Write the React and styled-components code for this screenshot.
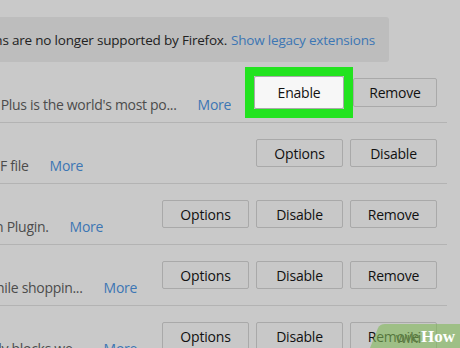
import React from "react";
import styled, { createGlobalStyle } from "styled-components";

const Global = createGlobalStyle`
  html, body { margin: 0; padding: 0; background: #c9c9c9; }
  body { font-family: "Open Sans", "Noto Sans", sans-serif; }
`;

const Page = styled.div`
  position: relative;
  width: 460px;
  height: 348px;
  overflow: hidden;
  background: #c9c9c9;
  padding-top: 17px;
  box-sizing: border-box;
`;

const Notice = styled.div`
  width: 389px;
  height: 45px;
  box-sizing: border-box;
  background: #bdbdbd;
  border-radius: 0 3px 3px 0;
  display: flex;
  align-items: center;
  justify-content: flex-end;
  padding-right: 14px;
  overflow: hidden;
  white-space: nowrap;
  font-size: 13.5px;
  color: #222;
  letter-spacing: -0.2px;
`;

const Link = styled.a`
  color: #3c76b4;
  text-decoration: none;
  margin-left: ${(p) => p.$gap || 0}px;
  flex: none;
  cursor: pointer;
`;

const List = styled.div`
  width: 447px;
`;

const Row = styled.div`
  height: 61px;
  box-sizing: border-box;
  border-bottom: 1px solid #b3b3b3;
  display: flex;
  align-items: center;
  padding-right: 10px;
`;

const Info = styled.div`
  width: ${(p) => p.$w}px;
  flex: none;
  display: flex;
  justify-content: flex-end;
  overflow: hidden;
  white-space: nowrap;
  padding-top: 24px;
  font-size: 14px;
  letter-spacing: -0.3px;
`;

const Desc = styled.span`
  color: #4c4c4c;
  flex: none;
`;

const Actions = styled.div`
  margin-left: auto;
  display: flex;
  align-items: center;
  gap: ${(p) => p.$gap ?? 7}px;
`;

const Button = styled.button`
  width: ${(p) => p.$w || 87}px;
  height: ${(p) => p.$h || 28}px;
  box-sizing: border-box;
  border: 1px solid #a9a9a9;
  border-radius: 2px;
  background: ${(p) => (p.$primary ? "#f7f7f7" : "#c8c8c8")};
  font-family: "Open Sans", "Noto Sans", sans-serif;
  font-size: 14px;
  letter-spacing: -0.2px;
  color: #111;
  padding: 0;
  cursor: pointer;
`;

const Highlight = styled.div`
  border: 9px solid #22e31f;
  display: flex;
`;

const Watermark = styled.div`
  position: absolute;
  right: 0;
  bottom: 0;
  width: 90px;
  height: 24px;
  display: flex;
  align-items: center;
  justify-content: flex-end;
  padding-right: 5px;
  box-sizing: border-box;
`;

const WmShape = styled.svg`
  position: absolute;
  inset: 0;
  width: 90px;
  height: 24px;
`;

const Wiki = styled.span`
  position: relative;
  font-family: "Liberation Sans", sans-serif;
  font-size: 15px;
  color: #5e7c44;
  margin-top: 2px;
`;

const How = styled.span`
  position: relative;
  font-family: "Liberation Serif", serif;
  font-weight: bold;
  font-size: 17px;
  color: #ffffff;
  margin-top: 2px;
`;

const rows = [
  { desc: "Adblock Plus is the world's most po...", w: 231, enable: true },
  { desc: "Displays a PDF file", w: 83, buttons: ["Options", "Disable"] },
  { desc: "Shockwave Flash Version Plugin.", w: 103, buttons: ["Options", "Disable", "Remove"] },
  { desc: "Saves you money while shoppin...", w: 137, buttons: ["Options", "Disable", "Remove"] },
  { desc: "Automatically blocks we...", w: 137, buttons: ["Options", "Disable", "Remove"] },
];

export default function App() {
  return (
    <Page>
      <Global />
      <Notice>
        <span>Legacy extensions are no longer supported by Firefox.</span>
        <Link $gap={4}>Show legacy extensions</Link>
      </Notice>
      <List>
        {rows.map((r, i) => (
          <Row key={i}>
            <Info $w={r.w}>
              <Desc>{r.desc}</Desc>
              <Link $gap={21}>More</Link>
            </Info>
            {r.enable ? (
              <Actions $gap={0}>
                <Highlight>
                  <Button $primary $w={90} $h={33}>Enable</Button>
                </Highlight>
                <Button $w={84} $h={29}>Remove</Button>
              </Actions>
            ) : (
              <Actions>
                {r.buttons.map((b) => (
                  <Button key={b}>{b}</Button>
                ))}
              </Actions>
            )}
          </Row>
        ))}
      </List>
      <Watermark>
        <WmShape viewBox="0 0 90 24" aria-hidden="true">
          <path d="M0 24 L8 4 Q10 0 15 0 L90 0 L90 24 Z" fill="rgb(130,185,90)" fillOpacity="0.6" />
        </WmShape>
        <Wiki>wiki</Wiki>
        <How>How</How>
      </Watermark>
    </Page>
  );
}
